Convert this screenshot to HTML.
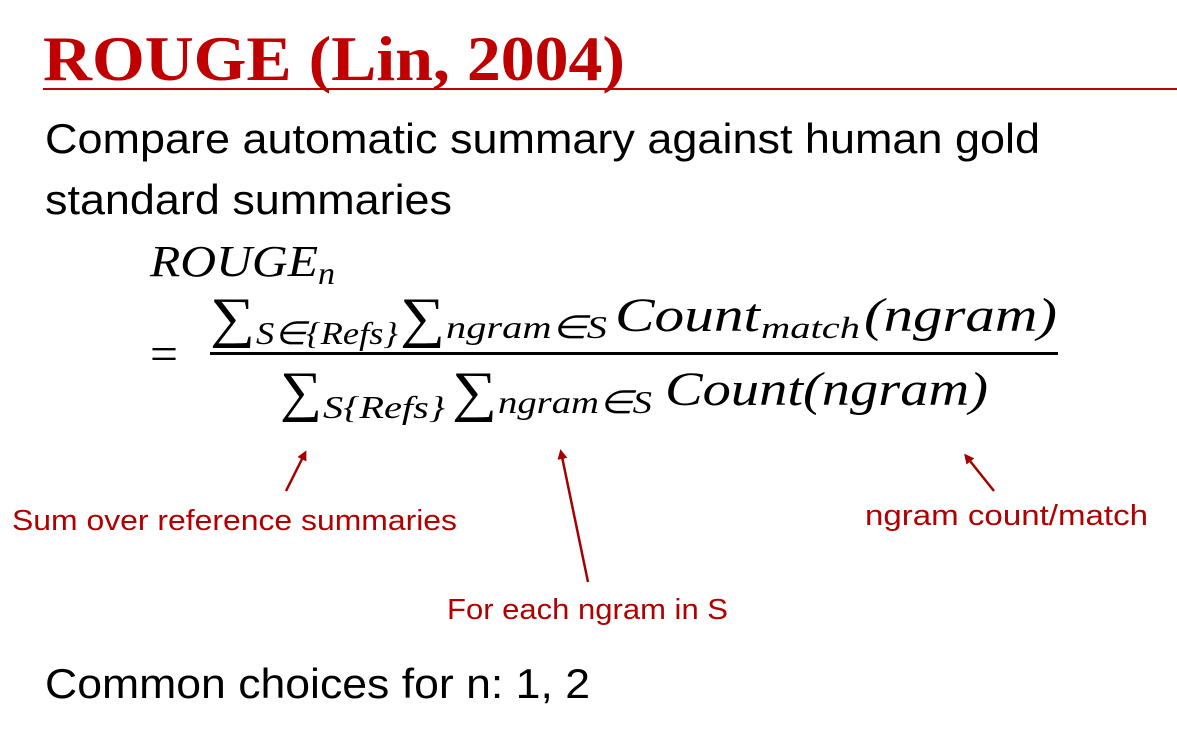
<!DOCTYPE html>
<html><head><meta charset="utf-8"><style>
html,body{margin:0;padding:0;background:#fff;width:1177px;height:734px;overflow:hidden}
svg{display:block}
.s{font-family:"Liberation Sans",sans-serif}
.m{font-family:"Liberation Serif",serif;font-style:italic}
.g{font-family:"Liberation Serif",serif}
</style></head><body>
<svg width="1177" height="734" viewBox="0 0 1177 734" xmlns="http://www.w3.org/2000/svg">
<defs><marker id="ah" markerWidth="10" markerHeight="10" refX="7" refY="5" orient="auto" markerUnits="userSpaceOnUse"><path d="M0,0 L10,5 L0,10 z" fill="#A50000"/></marker></defs>
<text x="43" y="80" class="g" font-weight="bold" font-size="64" fill="#C00000" textLength="582" lengthAdjust="spacingAndGlyphs">ROUGE (Lin, 2004)</text>
<rect x="43" y="88" width="1134" height="2" fill="#C00000"/>
<text x="45" y="153" class="s" font-size="42" fill="#000" textLength="995" lengthAdjust="spacingAndGlyphs">Compare automatic summary against human gold</text>
<text x="45" y="214" class="s" font-size="42" fill="#000" textLength="407" lengthAdjust="spacingAndGlyphs">standard summaries</text>
<text x="150" y="276" class="m" font-size="44" textLength="168" lengthAdjust="spacingAndGlyphs">ROUGE</text>
<text x="318" y="284" class="m" font-size="32" textLength="17" lengthAdjust="spacingAndGlyphs">n</text>
<text x="150" y="370" class="g" font-size="48" textLength="28" lengthAdjust="spacingAndGlyphs">=</text>
<text x="210" y="336" class="g" font-size="56" textLength="45" lengthAdjust="spacingAndGlyphs">∑</text>
<text x="256" y="344" class="m" font-size="32" textLength="142" lengthAdjust="spacingAndGlyphs">S∈{Refs}</text>
<text x="400" y="336" class="g" font-size="56" textLength="45" lengthAdjust="spacingAndGlyphs">∑</text>
<text x="446" y="338" class="m" font-size="32" textLength="161" lengthAdjust="spacingAndGlyphs">ngram∈S</text>
<text x="615" y="331" class="m" font-size="48" textLength="145" lengthAdjust="spacingAndGlyphs">Count</text>
<text x="761" y="338" class="m" font-size="31" textLength="99" lengthAdjust="spacingAndGlyphs">match</text>
<text x="864" y="331" class="m" font-size="48" textLength="193" lengthAdjust="spacingAndGlyphs">(ngram)</text>
<rect x="210" y="352" width="848" height="3" fill="#000"/>
<text x="280" y="410" class="g" font-size="56" textLength="42" lengthAdjust="spacingAndGlyphs">∑</text>
<text x="323" y="418" class="m" font-size="32" textLength="122" lengthAdjust="spacingAndGlyphs">S{Refs}</text>
<text x="452" y="410" class="g" font-size="56" textLength="45" lengthAdjust="spacingAndGlyphs">∑</text>
<text x="498" y="413" class="m" font-size="32" textLength="154" lengthAdjust="spacingAndGlyphs">ngram∈S</text>
<text x="665" y="405" class="m" font-size="48" textLength="323" lengthAdjust="spacingAndGlyphs">Count(ngram)</text>
<line x1="286" y1="491" x2="305" y2="453" stroke="#A50000" stroke-width="2.5" marker-end="url(#ah)"/>
<line x1="588" y1="582" x2="561" y2="452" stroke="#A50000" stroke-width="2.5" marker-end="url(#ah)"/>
<line x1="994" y1="491" x2="966" y2="456" stroke="#A50000" stroke-width="2.5" marker-end="url(#ah)"/>
<text x="12" y="530" class="s" font-size="29" fill="#B00000" textLength="445" lengthAdjust="spacingAndGlyphs">Sum over reference summaries</text>
<text x="865" y="525" class="s" font-size="29" fill="#B00000" textLength="283" lengthAdjust="spacingAndGlyphs">ngram count/match</text>
<text x="447" y="619" class="s" font-size="29" fill="#B00000" textLength="281" lengthAdjust="spacingAndGlyphs">For each ngram in S</text>
<text x="45" y="698" class="s" font-size="42" fill="#000" textLength="545" lengthAdjust="spacingAndGlyphs">Common choices for n: 1, 2</text>
</svg>
</body></html>
